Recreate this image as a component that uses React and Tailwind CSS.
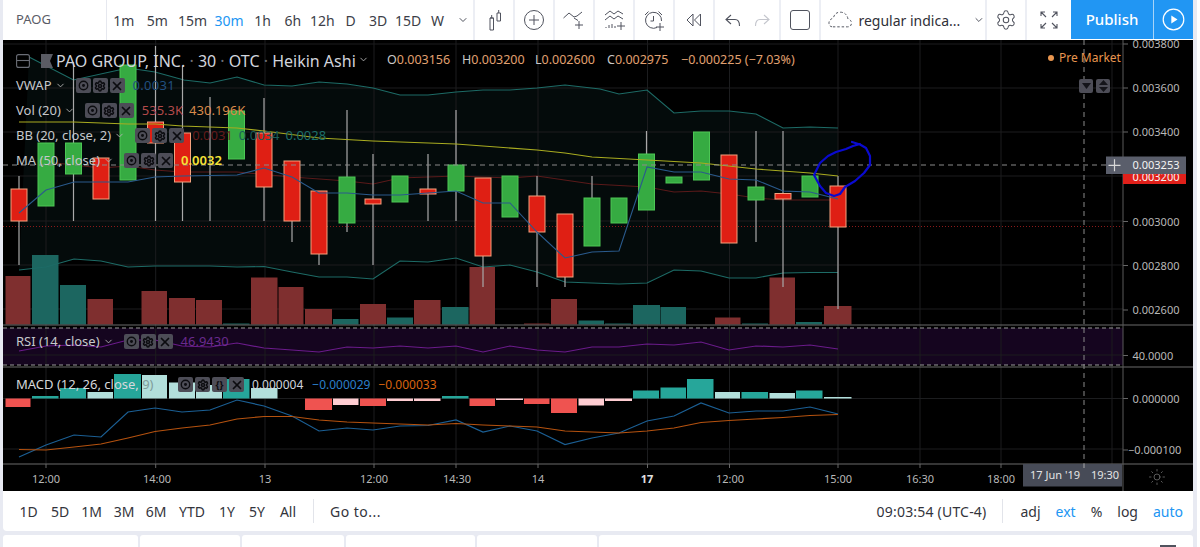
import React from "react";
import { Settings, X, ChevronDown, Sun } from "lucide-react";

const font = { fontFamily: '"Noto Sans", sans-serif' };

// [x, bodyTop, bodyBottom, wickTop, wickBottom, up]
const candles = [
  [19, 189, 221, 176, 265, 0], [46, 143, 206, 143, 206, 1], [73.5, 143, 174, 62, 221, 1], [101, 158, 199, 158, 199, 0],
  [128, 65, 180, 65, 180, 1], [155.5, 122, 143, 46, 221, 0], [182.5, 133, 182, 66, 221, 0], [210, 178, 178, 97, 221, 0],
  [236.5, 111, 159, 111, 159, 1], [264, 133, 187, 98, 221, 0], [292, 161, 221, 161, 242, 0], [319, 191, 254, 191, 265, 0],
  [347, 177, 223, 110, 232, 1], [373, 199, 204, 154, 265, 0], [400, 176, 202, 176, 202, 1], [428, 189, 194, 154, 221, 0],
  [456, 165, 191, 110, 221, 1], [483, 178, 256, 178, 287, 0], [510, 176, 217, 176, 217, 1], [537, 196, 232, 176, 287, 0],
  [565, 214, 277, 214, 287, 0], [592, 198, 246, 176, 246, 1], [619, 198, 223, 198, 223, 1], [646.5, 154, 210, 131, 210, 1],
  [674, 177, 183, 177, 183, 1], [701.5, 132, 180, 132, 180, 1], [729, 155, 243, 155, 243, 0], [756, 187, 200, 131, 242, 1],
  [783, 193.5, 199, 131, 287, 0], [810, 176, 197, 176, 197, 1], [838, 186, 227, 176, 309, 0],
];

// [x0, x1, top, up]
const vols = [
  [5.5, 30.5, 276, 0], [32, 58.5, 255, 1], [60, 86, 285, 1], [87.5, 113, 299, 0], [141.5, 167, 291, 0], [169, 195, 298, 0],
  [196, 222, 300, 0], [223, 249.5, 323.5, 1], [251, 277.5, 277.5, 0], [278.5, 303.5, 287, 0], [305, 332, 309, 0], [333, 358.5, 319, 1],
  [360, 386, 304, 0], [387, 413, 317.5, 1], [414, 440.5, 300, 0], [442, 468.5, 307, 1], [469.5, 495, 267, 0], [524, 549.5, 323.5, 0],
  [551, 577, 299, 0], [578.5, 604, 320.5, 1], [605, 631, 323.5, 1], [633, 660, 305, 1], [660.5, 686, 307, 1], [715, 740.5, 317.5, 0],
  [742, 768, 323.5, 1], [769.5, 795, 277.5, 0], [796, 822, 322, 1], [824, 851.5, 306, 0],
];

const Z = 398.5;
// [x0, x1, edge, kind] kind: 0 teal, 1 light teal, 2 red, 3 pink
const hist = [
  [5.5, 30.5, 407, 2], [32, 58.5, 396, 0], [60, 86, 388, 0], [87.5, 113, 392, 1], [114, 141, 374, 0], [142, 167, 375, 1],
  [169, 195, 382.5, 1], [196, 222, 385, 1], [223, 249.5, 379, 0], [251, 277.5, 388, 1], [305, 332, 410, 2], [333, 358.5, 405, 3],
  [360, 386, 406, 2], [387, 413, 401, 3], [414, 440.5, 401, 3], [442, 468.5, 396, 0], [469.5, 495, 406, 2], [496, 523, 400, 3],
  [524, 549.5, 404, 2], [551, 577, 413, 2], [578.5, 604, 405.5, 3], [605, 632, 401, 3], [633, 659, 390.5, 0], [660.5, 686, 387.5, 0],
  [687, 713.5, 379, 0], [715, 740, 392, 1], [741.5, 768, 392, 0], [769.5, 795, 393, 1], [796, 822.5, 390.5, 0], [824, 851.5, 397, 1],
];
const histColor = ["#26a69a", "#b2dfdb", "#ef5350", "#ffcdd2"];

const upper = "29,57 73.5,80 128,68 155,72 184,80 210,83 237,77 264,85 292,86 319,82 347,84 373,88 400,95 428,95 456,92 483,90 510,90 537,88 565,85 600,89 619,94 647,90 674,113 701,111 729,111 756,114 783,128 810,127 838,128";
const lower = "838,272.5 810,272.5 783,273 756,278 729,278 701,271 674,270 647,283 619,284 592,283 565,282 537,272 510,265 483,267 456,258 428,262 400,261 373,279 347,277 319,277 292,272 264,266.5 237,267 210,266 182,266 155,266 128,267 101,261 74,259 46,267 19,270";
const vwap = "19,213 46,190 74,182 128,182 155,177 182,176 237,175 264,168 292,177 319,193 347,193 373,195 400,195 428,193 456,191 483,203 510,203 537,232 565,258 592,252 619,251 647,167 674,172 701,172 729,179 756,180 783,191 810,192 838,199";
const basis = "46,162 74,165 101,168 128,166 155,170 182,172 237,172 292,177 347,181 373,184 400,178 456,176 510,178 537,176 592,184 647,187 674,192 701,191 729,194 756,198 783,200 838,200";
const ma = "19,122 74,122 128,124 155,124 182,126 237,128 264,131 319,138 373,141 456,144 537,150 565,153 592,157 647,160 701,163 756,169 810,173 838,176";
const rsi = "19,351 46,346 74,345 101,347 128,340 155,340 182,346 210,347 237,343 264,348 292,350 319,352 347,347 373,348 400,346 428,348 456,346 483,352 510,346 537,350 565,352 592,347 619,347 647,344 674,345 701,342 729,350 756,346 783,347 810,345 838,349";
const macd = "19,457 46,445 74,435 101,437 128,412 155,408 182,412 210,410 237,400 264,406 292,416 319,431 347,428 373,430 400,426 428,425.5 456,420 483,432 510,426 537,431 565,444.5 592,438 619,433 647,421 674,416 701,403 729,413 756,411 783,411 810,407 838,414";
const signal = "19,449.5 46,450 74,447 101,444 128,438 155,431.5 182,428 210,425 237,419 264,416.5 292,416.5 319,420 347,422 373,423 400,424 428,425 456,423.5 483,425 510,426 537,427 565,431 592,432 619,433 647,431 674,428 701,422.5 729,420.5 756,419 783,417.5 810,415.5 838,414.5";

const gridX = [46, 155.7, 265, 374, 456, 538, 647.5, 729.5, 838, 920, 1001, 1112];
const gridY = [44, 88, 132, 176, 221, 265, 309, 355, 398.5, 449];
const priceLabels = [["0.003800", 44], ["0.003600", 88], ["0.003400", 132], ["0.003000", 221.5], ["0.002800", 265.5], ["0.002600", 310], ["40.0000", 355.5], ["0.000000", 398.5], ["−0.000100", 450]];
const timeLabels = [["12:00", 46], ["14:00", 157], ["13", 265], ["12:00", 374], ["14:30", 457], ["14", 538], ["17", 647, true], ["12:00", 730], ["15:00", 838], ["16:30", 920], ["18:00", 1001]];

function Chart() {
  return (
    <svg viewBox="3 40 1190 451" className="absolute inset-0 w-full h-full" style={font}>
      <rect x="3" y="40" width="1190" height="451" fill="#000" />
      <rect x="3" y="328" width="1120" height="37" fill="#15051f" />
      <polygon points={`${upper} ${lower}`} fill="#040b0b" />
      {gridX.map((x) => <line key={x} x1={x} x2={x} y1="40" y2="464" stroke="#1c1d1f" />)}
      {gridY.map((y) => <line key={y} x1="3" x2="1123" y1={y} y2={y} stroke="#1c1d1f" />)}
      {gridX.map((x) => <line key={x} x1={x} x2={x} y1="464" y2="468" stroke="#666" />)}
      {priceLabels.map(([, y]) => <line key={y} x1="1123" x2="1128" y1={y} y2={y} stroke="#666" />)}

      {vols.map(([a, b, t, up]) => <rect key={a} x={a} y={t} width={b - a} height={324.5 - t} fill={up ? "#1c6660" : "#7f2f2f"} />)}
      <line x1="3" x2="1123" y1="226.5" y2="226.5" stroke="#8a1a1a" strokeDasharray="1 2" />

      <polyline points={upper} fill="none" stroke="#1d6b66" strokeWidth="1.1" />
      <polyline points={lower} fill="none" stroke="#1d6b66" strokeWidth="1.1" />
      <polyline points={basis} fill="none" stroke="#5a1a1a" strokeWidth="1.1" />

      {candles.map(([x, t, b, wt, wb]) => <line key={x} x1={x} x2={x} y1={wt} y2={wb} stroke="#a9a9a9" strokeWidth="1.2" />)}
      {candles.map(([x, t, b, wt, wb, up]) =>
        t === b ? null : (
          <rect key={x} x={x - 8} y={t} width="16" height={b - t} fill={up ? "#36ab42" : "#df1f14"} stroke={up ? "#4cc755" : "#f4a27e"} strokeWidth="1" />
        )
      )}
      <polyline points={vwap} fill="none" stroke="#2a5a8c" strokeWidth="1.1" />
      <polyline points={ma} fill="none" stroke="#a9ac20" strokeWidth="1.1" />

      <line x1="3" x2="1193" y1="325" y2="325" stroke="#6a6a6a" />
      <line x1="3" x2="1123" y1="328" y2="328" stroke="#9a9a9a" strokeDasharray="4 3" />
      <line x1="3" x2="1123" y1="365" y2="365" stroke="#9a9a9a" strokeDasharray="4 3" />
      <line x1="3" x2="1193" y1="367" y2="367" stroke="#6a6a6a" />
      <polyline points={rsi} fill="none" stroke="#6a1b8a" strokeWidth="1.2" />

      {hist.map(([a, b, e, k]) => (
        <rect key={a} x={a} y={Math.min(e, Z)} width={b - a} height={Math.abs(Z - e)} fill={histColor[k]} />
      ))}
      <polyline points={macd} fill="none" stroke="#1b5f94" strokeWidth="1.2" />
      <polyline points={signal} fill="none" stroke="#b5520f" strokeWidth="1.2" />

      <line x1="3" x2="1193" y1="464" y2="464" stroke="#6a6a6a" />
      <line x1="1123" x2="1123" y1="40" y2="491" stroke="#5a5a5a" />
      <line x1="3" x2="1123" y1="165" y2="165" stroke="#8a8a8a" strokeDasharray="5 4" />
      <line x1="1084" x2="1084" y1="40" y2="464" stroke="#8a8a8a" strokeDasharray="5 4" />

      <path d="M852 142 L860 144.5 L866 148 L870 156 L870 165 L864 173 L855 181 L845 187 L840 194 L834 196 L826 193 L820 186 L814 175 L820 163 L828 156 L836 152 L846 149 L853 146 L860 144" fill="none" stroke="#0a0ad0" strokeWidth="2.2" strokeLinejoin="round" strokeLinecap="round" />

      <rect x="1123" y="170" width="63" height="14" fill="#e0201a" />
      <text x="1132.5" y="181" fill="#f3f3f3" fontSize="11">0.003200</text>
      <rect x="1106" y="156.5" width="80" height="17.5" fill="#5a5e6b" />
      <path d="M1108.5 165.3 h12 M1114.5 159.3 v12" stroke="#d8d8d8" strokeWidth="1.2" />
      <text x="1132.5" y="169" fill="#f3f3f3" fontSize="11">0.003253</text>

      {priceLabels.map(([t, y]) => <text key={y} x={t[0] === "−" ? 1128 : 1132.5} y={y + 4} fill="#b8b8b8" fontSize="11">{t}</text>)}
      {timeLabels.map(([t, x, b]) => <text key={x} x={x} y="483" textAnchor="middle" fill={b ? "#e0e0e0" : "#b8b8b8"} fontWeight={b ? 700 : 400} fontSize="11">{t}</text>)}

      <rect x="1023" y="464" width="99" height="22.5" fill="#474b57" />
      <line x1="1084" x2="1084" y1="464" y2="468" stroke="#aaa" />
      <text x="1030" y="479" fill="#e4e4e4" fontSize="11">17 Jun '19</text>
      <text x="1091" y="479" fill="#e4e4e4" fontSize="11">19:30</text>
    </svg>
  );
}

function Btn({ children }) {
  return <span className="w-[15px] h-[15px] rounded-[2px] bg-[#4d4d57] text-[#0c0c10] flex items-center justify-center">{children}</span>;
}
function Eye() {
  return (
    <svg viewBox="0 0 12 12" className="w-[11px] h-[11px]">
      <circle cx="6" cy="6" r="4.6" fill="none" stroke="currentColor" strokeWidth="1.5" />
      <circle cx="6" cy="6" r="1.6" fill="currentColor" />
    </svg>
  );
}
function Gear() {
  return <Settings className="w-[12px] h-[12px]" strokeWidth={3} />;
}
function Cross() {
  return <X className="w-[14px] h-[14px]" strokeWidth={3} />;
}
function Row({ label, children }) {
  return (
    <div className="h-[25px] flex items-center text-[13px] text-[#c6c8cc] whitespace-nowrap">
      <span>{label}</span>
      <ChevronDown className="w-[11px] h-[11px] text-[#b0b0b0] ml-[3px]" />
      <span className="flex gap-[2px] ml-[10px]">
        <Btn><Eye /></Btn><Btn><Gear /></Btn><Btn><Cross /></Btn>
      </span>
      {children}
    </div>
  );
}

function Cell({ w, children }) {
  return <div className={`${w} h-full border-r-2 border-[#eceef4] flex items-center justify-center shrink-0`}>{children}</div>;
}

const intervals = [
  ["1m", "w-[33.5px]"], ["5m", "w-[33.5px]"], ["15m", "w-[37px]"], ["30m", "w-[36px]"], ["1h", "w-[31px]"], ["6h", "w-[29.5px]"],
  ["12h", "w-[29.5px]"], ["D", "w-[27px]"], ["3D", "w-[28px]"], ["15D", "w-[32px]"], ["W", "w-[27px]"],
];

function Stroke({ w, h, vb, children }) {
  return <svg width={w} height={h} viewBox={vb} fill="none" stroke="#50535e" strokeWidth="1">{children}</svg>;
}

function Toolbar() {
  return (
    <div className="h-[40px] w-[1190px] flex bg-white text-[14px] text-[#3c3e48] shrink-0">
      <div className="w-[104px] h-full border-r border-[#e6e8ef] pl-[13px] flex items-center text-[13px] text-[#5a5c66] shrink-0">PAOG</div>
      <div className="w-[368px] h-full border-r-2 border-[#eceef4] flex items-center shrink-0">
        {intervals.map(([t, w]) => (
          <span key={t} className={`${w} text-center ${t === "30m" ? "text-[#2196f3]" : ""}`}>{t}</span>
        ))}
        <ChevronDown className="w-[12px] h-[12px] ml-[6px] text-[#50535e]" />
      </div>
      <Cell w="w-[40px]">
        <Stroke w="18" h="22" vb="0 0 18 22">
          <path d="M5 9 h3.5 v12 h-3.5 z M5 9 h3.5 M12 4 h3.5 v8 h-3.5 z M13.7 1 v3 M6.7 6 v3" />
        </Stroke>
      </Cell>
      <Cell w="w-[40px]">
        <Stroke w="22" h="22" vb="0 0 22 22">
          <circle cx="11" cy="11" r="9.5" /><path d="M11 6 v10 M6 11 h10" />
        </Stroke>
      </Cell>
      <Cell w="w-[40px]">
        <Stroke w="22" h="20" vb="0 0 22 20">
          <path d="M0.5 8 L6 3 L11 7 L14 6 L19 2 M11 8 L15 10.5" /><path d="M16 11 v8 M12 15 h8" />
        </Stroke>
      </Cell>
      <Cell w="w-[40px]">
        <Stroke w="23" h="22" vb="0 0 23 22">
          <path d="M2 6 L7 2 L11 5 L15 2 L20 5 M2 11 L7 7 L11 10 L15 7 L20 10" /><path d="M3 19 v-1 M6 19 v-3 M9 19 v-4 M12 19 v-2" /><path d="M18 13 v8 M14 17 h8" />
        </Stroke>
      </Cell>
      <Cell w="w-[40px]">
        <Stroke w="22" h="23" vb="0 0 22 23">
          <path d="M14 18.5 A8 8 0 1 1 18.5 12" /><path d="M10.5 7 v5 h-3" /><path d="M2 6 L5.5 2.5 M15.5 2.5 L19 6" /><path d="M17 14 v8 M13 18 h8" />
        </Stroke>
      </Cell>
      <Cell w="w-[40px]">
        <Stroke w="18" h="16" vb="0 0 18 16">
          <path d="M8 2 L2 8 L8 14 z M15.5 2 L9.5 8 L15.5 14 z" />
        </Stroke>
      </Cell>
      <div className="w-[66px] h-full border-r-2 border-[#eceef4] flex items-center justify-center gap-[13px] shrink-0">
        <Stroke w="16" h="13" vb="0 0 16 13">
          <path d="M6 1 L1 5.5 L6 10 M1 5.5 H10 Q14.5 5.5 14.5 12" strokeWidth="1.1" />
        </Stroke>
        <svg width="16" height="13" viewBox="0 0 16 13" fill="none" stroke="#c4c6cd" strokeWidth="1.1">
          <path d="M10 1 L15 5.5 L10 10 M15 5.5 H6 Q1.5 5.5 1.5 12" />
        </svg>
      </div>
      <Cell w="w-[40px]">
        <div className="w-[20px] h-[20px] border-[1.5px] border-[#50535e] rounded-[3px]" />
      </Cell>
      <div className="w-[166px] h-full border-r-2 border-[#eceef4] flex items-center pl-[7px] shrink-0 whitespace-nowrap">
        <svg width="25" height="18" viewBox="0 0 25 18" fill="none" stroke="#50535e" strokeWidth="1" strokeDasharray="2.5 2">
          <path d="M5 16 H20 Q24 16 24 12 Q24 9 20.5 8 Q19 1 12.5 1 Q7 1 5.5 7 Q1 8.5 1 12 Q1 16 5 16 z" />
        </svg>
        <span className="ml-[6px] text-[#2f3038]">regular indica...</span>
        <ChevronDown className="w-[12px] h-[12px] ml-[13px] text-[#50535e]" />
      </div>
      <Cell w="w-[40px]">
        <Settings className="w-[22px] h-[22px] text-[#50535e]" strokeWidth={1.1} />
      </Cell>
      <div className="w-[44px] h-full flex items-center justify-center shrink-0">
        <Stroke w="18" h="18" vb="0 0 18 18">
          <path d="M1 5 V1 H5 M1 1 L6 6 M13 1 H17 V5 M17 1 L12 6 M1 13 V17 H5 M1 17 L6 12 M13 17 H17 V13 M17 17 L12 12" strokeWidth="1.1" />
        </Stroke>
      </div>
      <div className="w-[82px] h-[39px] bg-[#2196f3] text-white text-[15px] font-medium flex items-center justify-center shrink-0">Publish</div>
      <div className="w-[40px] h-[39px] bg-[#2196f3] border-l border-[#a8d4f8] flex items-center justify-center shrink-0">
        <svg width="23" height="23" viewBox="0 0 23 23">
          <circle cx="11.5" cy="11.5" r="10.3" fill="none" stroke="#fff" strokeWidth="1.2" />
          <path d="M9.3 7.5 L15.5 11.5 L9.3 15.5 z" fill="#fff" />
        </svg>
      </div>
    </div>
  );
}

function ChartPane() {
  return (
    <div className="relative h-[451px] w-[1190px] shrink-0 bg-black overflow-hidden">
      <Chart />
      {/* legend, main pane */}
      <div className="absolute left-[13px] top-[8px]">
        <div className="h-[25px] flex items-center whitespace-nowrap">
          <svg width="14" height="14" viewBox="0 0 14 14" fill="none" stroke="#6a6d76" strokeWidth="1.1" className="mr-[11px]">
            <rect x="0.6" y="0.6" width="12.8" height="12.8" rx="2" /><path d="M1 6.5 H13" />
          </svg>
          <svg width="13" height="14" viewBox="0 0 13 14" className="mr-[2px]"><path d="M0 0 H12 L9 7 L12 14 H0 z" fill="#5b5c64" /></svg>
          <span className="text-[16px] text-[#d1d4dc] w-[334px]">PAO GROUP, INC. <span className="text-[#6d6f75]">·</span> 30 <span className="text-[#6d6f75]">·</span> OTC <span className="text-[#6d6f75]">·</span> Heikin Ashi<ChevronDown className="inline w-[11px] h-[11px] ml-[2px] mb-[5px] text-[#b0b0b0]" /></span>
          <span className="text-[12.5px] text-[#c9c9c9] flex ml-[-3px]">
            <span className="w-[75px]">O<span className="text-[#e0a070]">0.003156</span></span>
            <span className="w-[73px]">H<span className="text-[#e0a070]">0.003200</span></span>
            <span className="w-[72px]">L<span className="text-[#e0a070]">0.002600</span></span>
            <span className="w-[74px]">C<span className="text-[#e0a070]">0.002975</span></span>
            <span className="text-[#e0a070]">−0.000225 (−7.03%)</span>
          </span>
        </div>
        <Row label="VWAP">
          <span className="ml-[8px] text-[#21507f] tracking-[0.3px]">0.0031</span>
        </Row>
        <Row label="Vol (20)">
          <span className="ml-[8px] text-[#b34a4a]">535.3K</span>
          <span className="ml-[6px] text-[#d98a4a]">430.196K</span>
        </Row>
        <Row label="BB (20, close, 2)">
          <span className="ml-[8px] text-[#641a1a]">0.0031</span>
          <span className="ml-[6px] text-[#1a5e5a]">0.0034</span>
          <span className="ml-[6px] text-[#1c6f6a]">0.0028</span>
        </Row>
        <Row label="MA (50, close)">
          <span className="ml-[8px] text-[#f5e33a] font-semibold">0.0032</span>
        </Row>
      </div>
      {/* Pre market */}
      <div className="absolute left-[1045px] top-[9px] flex items-center text-[12px] text-[#e9964f] whitespace-nowrap">
        <span className="w-[6px] h-[6px] rounded-full bg-[#e9964f] mr-[5px]" />Pre Market
      </div>
      <div className="absolute left-[1076px] top-[39px] flex gap-[3px]">
        <span className="w-[14px] h-[14px] rounded-[2px] bg-[#4d4d57] flex items-center justify-center">
          <svg width="9" height="6" viewBox="0 0 9 6"><path d="M0 0 H9 L4.5 6 z" fill="#14141a" /></svg>
        </span>
        <span className="w-[14px] h-[14px] rounded-[2px] bg-[#4d4d57] flex items-center justify-center">
          <svg width="9" height="12" viewBox="0 0 9 12"><path d="M0 5 L4.5 0 L9 5 z M0 7 H9 L4.5 12 z" fill="#14141a" /></svg>
        </span>
      </div>
      {/* RSI */}
      <div className="absolute left-[13px] top-[289px]">
        <Row label="RSI (14, close)">
          <span className="ml-[8px] text-[#6a2a8e]">46.9430</span>
        </Row>
      </div>
      {/* MACD */}
      <div className="absolute left-[13px] top-[332px] h-[25px] flex items-center text-[13px] text-[#d6d8dc] whitespace-nowrap">
        <span className="w-[162px]">MACD (12, 26, close, <span className="text-[#7f9c9a]">9)</span></span>
        <span className="flex gap-[2px]">
          <Btn><Eye /></Btn><Btn><Gear /></Btn>
          <Btn><span className="text-[10px] font-bold leading-none">{"{}"}</span></Btn>
          <Btn><Cross /></Btn>
        </span>
        <span className="ml-[8px] text-[12px] text-[#d1d4dc]">0.000004</span>
        <span className="ml-[9px] text-[12px] text-[#2b7fc9]">−0.000029</span>
        <span className="ml-[8px] text-[12px] text-[#d9640f]">−0.000033</span>
      </div>
      <Sun className="absolute left-[1145px] top-[428px] w-[18px] h-[18px] text-[#777777]" strokeWidth={1} />
    </div>
  );
}

const ranges = [
  ["1D", "w-[33px]"], ["5D", "w-[30px]"], ["1M", "w-[33px]"], ["3M", "w-[32px]"], ["6M", "w-[32px]"], ["YTD", "w-[40px]"],
  ["1Y", "w-[30px]"], ["5Y", "w-[30px]"], ["All", "w-[32px]"],
];

function BottomBar() {
  return (
    <div className="h-[40px] w-[1190px] bg-white rounded-b-[4px] flex items-center text-[14px] text-[#33343c] whitespace-nowrap shrink-0 pl-[9px]">
      {ranges.map(([t, w]) => <span key={t} className={`${w} text-center`}>{t}</span>)}
      <span className="w-px h-[24px] bg-[#e2e4ea] ml-[9px]" />
      <span className="ml-[16px] tracking-[0.5px]">Go to...</span>
      <span className="ml-auto tracking-[0.2px]">09:03:54 (UTC-4)</span>
      <span className="w-px h-[24px] bg-[#e2e4ea] ml-[16px]" />
      <span className="ml-[17px]">adj</span>
      <span className="ml-[15px] text-[#2196f3]">ext</span>
      <span className="ml-[15px]">%</span>
      <span className="ml-[15px]">log</span>
      <span className="ml-[15px] mr-[10px] text-[#2196f3]">auto</span>
    </div>
  );
}

function Tiles() {
  return (
    <div className="h-[12px] w-[1190px] flex gap-[2px] mt-[4px] shrink-0">
      {["w-[135px]", "w-[100px]", "w-[102px]", "w-[129px]", "w-[120px]", "flex-1"].map((w) => (
        <div key={w} className={`${w} bg-white rounded-t-[3px] relative`}>
          {w === "flex-1" && <span className="absolute right-[17px] top-[10px] w-[16px] h-[2px] bg-[#50535e]" />}
        </div>
      ))}
    </div>
  );
}

export default function App() {
  return (
    <div className="w-[1200px] h-[547px] overflow-hidden bg-white" style={font}>
      <div className="w-[1197px] h-full bg-[#e8eaf2] pl-[3px] flex flex-col">
        <Toolbar />
        <ChartPane />
        <BottomBar />
        <Tiles />
      </div>
    </div>
  );
}
